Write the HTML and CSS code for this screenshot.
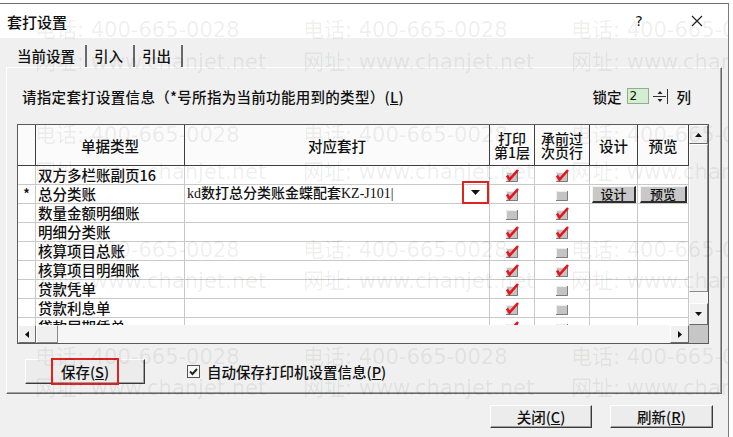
FILE: index.html
```html
<!DOCTYPE html>
<html lang="zh-CN">

<head>
    <meta charset="UTF-8">
    <title>套打设置</title>
    <link rel="stylesheet" href="styles.css">
</head>

<body>
    <div class="dialog">
        <div class="titlebar">
            <span class="title">套打设置</span>
            <div class="title-btns">
                <span class="help">?</span>
                <span class="close">
                    <svg width="12" height="12" viewBox="0 0 12 12"><path d="M1 1L11 11M11 1L1 11" stroke="#222" stroke-width="1.2"/></svg>
                </span>
            </div>
        </div>

        <div class="tabs">
            <span class="tab">当前设置</span><span class="tab">引入</span><span class="tab">引出</span>
        </div>

        <div class="panel">
            <div class="hint-row">
                <span class="hint">请指定套打设置信息（*号所指为当前功能用到的类型）(<u>L</u>)</span>
                <div class="lock">
                    <span>锁定</span>
                    <span class="lock-box">2</span>
                    <svg class="spin" width="18" height="17" viewBox="0 0 18 17">
                        <path d="M1 8.5h13M15.5 1v15" stroke="#333"/>
                        <path d="M5.5 6l2.5-3 2.5 3zM5.5 11l2.5 3 2.5-3z" fill="#222"/>
                    </svg>
                    <span class="lock-unit">列</span>
                </div>
            </div>

            <div class="grid">
                <div class="grid-body">
                    <table>
                        <colgroup>
                            <col class="c-mark"><col class="c-type"><col class="c-tpl"><col class="c-ck1"><col class="c-ck2"><col class="c-btn1"><col class="c-btn2">
                        </colgroup>
                        <thead>
                            <tr class="head">
                                <th></th>
                                <th>单据类型</th>
                                <th>对应套打</th>
                                <th class="two">打印<br>第1层</th>
                                <th class="two">承前过<br>次页行</th>
                                <th>设计</th>
                                <th>预览</th>
                            </tr>
                        </thead>
                        <tbody>
                            <tr>
                                <td class="mark"></td><td>双方多栏账副页16</td><td></td>
                                <td class="ck"><svg class="box"><use href="#ck-on"/></svg></td>
                                <td class="ck"><svg class="box"><use href="#ck-on"/></svg></td>
                                <td></td><td></td>
                            </tr>
                            <tr>
                                <td class="mark">*</td><td>总分类账</td>
                                <td>
                                    <div class="pick">
                                        <span class="pick-text">kd数打总分类账金蝶配套KZ-J101|</span>
                                        <span class="drop">
                                            <svg width="9" height="5" viewBox="0 0 9 5"><path d="M0 0h9L4.5 5z" fill="#111"/></svg>
                                        </span>
                                    </div>
                                </td>
                                <td class="ck"><svg class="box"><use href="#ck-on"/></svg></td>
                                <td class="ck"><svg class="box"><use href="#ck-off"/></svg></td>
                                <td><span class="cell-btn">设计</span></td>
                                <td><span class="cell-btn">预览</span></td>
                            </tr>
                            <tr>
                                <td class="mark"></td><td>数量金额明细账</td><td></td>
                                <td class="ck"><svg class="box"><use href="#ck-off"/></svg></td>
                                <td class="ck"><svg class="box"><use href="#ck-on"/></svg></td>
                                <td></td><td></td>
                            </tr>
                            <tr>
                                <td class="mark"></td><td>明细分类账</td><td></td>
                                <td class="ck"><svg class="box"><use href="#ck-on"/></svg></td>
                                <td class="ck"><svg class="box"><use href="#ck-on"/></svg></td>
                                <td></td><td></td>
                            </tr>
                            <tr>
                                <td class="mark"></td><td>核算项目总账</td><td></td>
                                <td class="ck"><svg class="box"><use href="#ck-on"/></svg></td>
                                <td class="ck"><svg class="box"><use href="#ck-off"/></svg></td>
                                <td></td><td></td>
                            </tr>
                            <tr>
                                <td class="mark"></td><td>核算项目明细账</td><td></td>
                                <td class="ck"><svg class="box"><use href="#ck-on"/></svg></td>
                                <td class="ck"><svg class="box"><use href="#ck-on"/></svg></td>
                                <td></td><td></td>
                            </tr>
                            <tr>
                                <td class="mark"></td><td>贷款凭单</td><td></td>
                                <td class="ck"><svg class="box"><use href="#ck-on"/></svg></td>
                                <td class="ck"><svg class="box"><use href="#ck-off"/></svg></td>
                                <td></td><td></td>
                            </tr>
                            <tr>
                                <td class="mark"></td><td>贷款利息单</td><td></td>
                                <td class="ck"><svg class="box"><use href="#ck-on"/></svg></td>
                                <td class="ck"><svg class="box"><use href="#ck-off"/></svg></td>
                                <td></td><td></td>
                            </tr>
                            <tr>
                                <td class="mark"></td><td>贷款展期凭单</td><td></td>
                                <td class="ck"><svg class="box"><use href="#ck-on"/></svg></td>
                                <td class="ck"><svg class="box"><use href="#ck-off"/></svg></td>
                                <td></td><td></td>
                            </tr>
                        </tbody>
                    </table>
                </div>

                <div class="vscroll">
                    <span class="sb-btn">
                        <svg width="7" height="4" viewBox="0 0 7 4"><path d="M0 4h7L3.5 0z" fill="#111"/></svg>
                    </span>
                    <span class="sb-thumb"></span>
                    <span class="sb-track"></span>
                    <span class="sb-btn down">
                        <svg width="7" height="4" viewBox="0 0 7 4"><path d="M0 0h7L3.5 4z" fill="#111"/></svg>
                    </span>
                </div>
                <div class="hscroll">
                    <span class="sb-btn left">
                        <svg width="4" height="7" viewBox="0 0 4 7"><path d="M4 0v7L0 3.5z" fill="#111"/></svg>
                    </span>
                    <span class="sb-thumb h"></span>
                    <span class="sb-track"></span>
                    <span class="sb-btn right">
                        <svg width="4" height="7" viewBox="0 0 4 7"><path d="M0 0v7L4 3.5z" fill="#111"/></svg>
                    </span>
                </div>
                <div class="corner"></div>
            </div>

            <div class="save-row">
                <button class="btn save"><span class="save-label">保存(<u>S</u>)</span></button>
                <label class="auto-save">
                    <span class="check">
                        <svg width="11" height="11" viewBox="0 0 11 11"><path d="M2 5.5l2.5 2.5 4.5-5" stroke="#1d2a1d" stroke-width="2" fill="none"/></svg>
                    </span>
                    自动保存打印机设置信息(<u>P</u>)
                </label>
            </div>
        </div>

        <div class="footer">
            <button class="btn close-btn">关闭(<u>C</u>)</button>
            <button class="btn refresh-btn">刷新(<u>R</u>)</button>
        </div>

        <!-- watermark on top of the screenshot -->
        <div class="watermark">
            <div class="wm-line"><span>电话: 400-665-0028</span><span>电话: 400-665-0028</span><span>电话: 400-665-0028</span></div>
            <div class="wm-line"><span>网址: www.chanjet.net</span><span>网址: www.chanjet.net</span><span>网址: www.chanjet.net</span></div>
            <div class="wm-line"><span>电话: 400-665-0028</span><span>电话: 400-665-0028</span><span>电话: 400-665-0028</span></div>
            <div class="wm-line"><span>网址: www.chanjet.net</span><span>网址: www.chanjet.net</span><span>网址: www.chanjet.net</span></div>
            <div class="wm-line"><span>电话: 400-665-0028</span><span>电话: 400-665-0028</span><span>电话: 400-665-0028</span></div>
            <div class="wm-line"><span>网址: www.chanjet.net</span><span>网址: www.chanjet.net</span><span>网址: www.chanjet.net</span></div>
            <div class="wm-line"><span>电话: 400-665-0028</span><span>电话: 400-665-0028</span><span>电话: 400-665-0028</span></div>
            <div class="wm-line"><span>网址: www.chanjet.net</span><span>网址: www.chanjet.net</span><span>网址: www.chanjet.net</span></div>
        </div>
    </div>

    <svg class="defs" width="0" height="0">
        <symbol id="ck-off" viewBox="0 0 16 16">
            <rect x="2" y="5" width="12" height="10" fill="#c4c4c4"/>
            <path d="M2.5 14.5V5.5h11" stroke="#efefef" fill="none"/>
            <path d="M2 14.5h11.5V5" stroke="#7c7c7c" fill="none"/>
        </symbol>
        <symbol id="ck-on" viewBox="0 0 16 16">
            <rect x="2" y="5" width="12" height="10" fill="#c4c4c4"/>
            <path d="M2.5 14.5V5.5h11" stroke="#efefef" fill="none"/>
            <path d="M2 14.5h11.5V5" stroke="#7c7c7c" fill="none"/>
            <path d="M3 8.5L5.5 12.5L14 3" stroke="#e8141c" stroke-width="2.6" fill="none"/>
        </symbol>
    </svg>
</body>

</html>
```

FILE: styles.css
```css
body {
    margin: 0;
    background: #fff;
    font-family: "Noto Sans CJK SC", "DejaVu Sans", sans-serif;
    font-size: 14.5px;
    font-weight: 500;
    color: #111;
}

.dialog {
    position: relative;
    width: 729px;
    height: 434px;
    margin-top: 3px;
    box-sizing: border-box;
    border-top: 1px solid #6e6e6e;
    border-right: 1px solid #7a7a7a;
    background: #f0f0f0;
    overflow: hidden;
}

.titlebar {
    height: 34px;
    background: #fff;
    display: flex;
    align-items: center;
    justify-content: space-between;
    padding: 0 21px 0 7px;
    font-size: 15px;
}

.title-btns {
    display: flex;
    gap: 38px;
    align-items: center;
}

.help,
.close {
    width: 20px;
    display: flex;
    justify-content: center;
}

.help {
    font-family: "DejaVu Sans", sans-serif;
    font-size: 14px;
    font-weight: normal;
}

.tabs {
    display: flex;
    height: 29px;
    box-sizing: border-box;
    padding: 7px 0 0 10px;
}

.tab {
    height: 22px;
    line-height: 22px;
    padding: 0 10px 0 7px;
    border-right: 2px solid #6a6a6a;
}

.panel {
    margin-left: 6px;
    width: 716px;
    height: 327px;
    box-sizing: border-box;
    border-top: 1px solid #fff;
    border-left: 1px solid #fff;
    border-right: 1px solid #696969;
    border-bottom: 1px solid #696969;
    box-shadow: inset -1px -1px #a0a0a0;
    padding: 18px 0 0 10px;
}

.hint-row {
    display: flex;
    align-items: center;
    justify-content: space-between;
    height: 20px;
    padding: 0 30px 0 5px;
}

.hint {
    letter-spacing: 0.3px;
}

.lock {
    display: flex;
    align-items: center;
}

.lock-box {
    width: 22px;
    height: 16px;
    margin-left: 5px;
    box-sizing: border-box;
    border: 1px solid #8fae8f;
    background: #d4efcf;
    font-family: "DejaVu Sans", sans-serif;
    font-size: 12px;
    font-weight: normal;
    line-height: 14px;
    padding-left: 2px;
}

.spin {
    margin-left: 3px;
}

.lock-unit {
    margin-left: 7px;
}

/* grid */
.grid {
    margin-top: 18px;
    width: 692px;
    height: 220px;
    box-sizing: border-box;
    border: 1px solid #5a5a5a;
    display: grid;
    grid-template-columns: 671px 19px;
    grid-template-rows: 200px 18px;
    background: #fff;
}

.grid-body {
    overflow: hidden;
}

table {
    border-collapse: separate;
    border-spacing: 0;
    table-layout: fixed;
    width: 671px;
}

.c-mark { width: 18px; }
.c-type { width: 149px; }
.c-tpl { width: 305px; }
.c-ck1 { width: 45px; }
.c-ck2 { width: 55px; }
.c-btn1 { width: 48px; }
.c-btn2 { width: 51px; }

th {
    font-weight: 500;
    background: #fbfbfb;
    border-right: 1px solid #3f3f3f;
    border-bottom: 1px solid #3f3f3f;
    padding: 0;
    text-align: center;
}

th.two {
    font-size: 14px;
    line-height: 14px;
}

tr.head {
    height: 41px;
}

tbody tr {
    height: 19px;
}

td {
    border-right: 1px solid #c9c9c9;
    border-bottom: 1px solid #c9c9c9;
    padding: 0 0 0 2px;
    line-height: 16px;
    white-space: nowrap;
    overflow: visible;
}

td.mark {
    padding: 0;
    text-align: center;
}

td.ck {
    padding: 0;
    text-align: center;
    line-height: 0;
}

.box {
    width: 16px;
    height: 16px;
}

.pick {
    display: flex;
    align-items: center;
    justify-content: space-between;
    height: 18px;
}

.pick-text {
    font-family: "Liberation Serif", "Noto Sans CJK SC", serif;
    font-size: 14px;
}

.drop {
    width: 19px;
    height: 15px;
    margin: 0 4px 4px 0;
    display: flex;
    align-items: center;
    justify-content: center;
    outline: 2px solid #e3211f;
    outline-offset: 2px;
}

.cell-btn {
    display: block;
    height: 17px;
    margin: 0 1px 0 0;
    box-sizing: border-box;
    background: #c8c8c8;
    border: 1px solid;
    border-color: #f4f4f4 #2e2e2e #2e2e2e #f4f4f4;
    border-width: 1px 2px 2px 1px;
    font-size: 13px;
    line-height: 14px;
    text-align: center;
}

/* scrollbars */
.vscroll {
    display: flex;
    flex-direction: column;
    background: #f6f6f6;
}

.hscroll {
    display: flex;
    background: #f6f6f6;
}

.sb-btn {
    height: 19px;
    box-sizing: border-box;
    border: 1px solid;
    border-color: #fff #6a6a6a #6a6a6a #fff;
    background: #f0f0f0;
    display: flex;
    align-items: center;
    justify-content: center;
}

.sb-btn.down {
    height: 22px;
}

.sb-btn.left {
    width: 18px;
    height: 18px;
}

.sb-btn.right {
    width: 19px;
    height: 18px;
}

.sb-thumb {
    height: 148px;
    box-sizing: border-box;
    border: 1px solid;
    border-color: #fff #8a8a8a #8a8a8a #fff;
    background: #f0f0f0;
}

.sb-thumb.h {
    width: 22px;
    height: 18px;
}

.sb-track {
    flex-grow: 1;
}

.corner {
    background: #c6c6c6;
}

/* bottom */
.save-row {
    display: flex;
    align-items: center;
    margin-top: 15px;
    padding-left: 8px;
}

.btn {
    font-family: inherit;
    font-size: 14.5px;
    font-weight: 500;
    color: #111;
    padding: 0;
    background: #ececec;
    border: 1px solid;
    border-color: #fff #3a3a3a #3a3a3a #fff;
    box-shadow: inset -1px -1px #a0a0a0;
}

.btn.save {
    width: 120px;
    height: 25px;
}

.save-label {
    display: inline-block;
    height: 19px;
    line-height: 19px;
    padding: 0 6px;
    outline: 2px solid #e3211f;
    outline-offset: 2px;
}

.auto-save {
    display: flex;
    align-items: center;
    margin-left: 42px;
}

.check {
    width: 13px;
    height: 13px;
    margin-right: 7px;
    box-sizing: border-box;
    border: 1px solid #555;
    background: #f8f8f8;
    display: flex;
    align-items: center;
    justify-content: center;
}

.footer {
    display: flex;
    justify-content: flex-end;
    gap: 18px;
    padding: 11px 15px 0 0;
}

.close-btn {
    width: 102px;
    height: 23px;
}

.refresh-btn {
    width: 103px;
    height: 23px;
}

/* watermark overlay */
.watermark {
    position: absolute;
    inset: 0;
    pointer-events: none;
    padding-top: 15px;
    font-family: "DejaVu Sans", "Noto Sans CJK SC", sans-serif;
    font-size: 21px;
    font-weight: normal;
    color: rgba(0, 0, 0, 0.075);
}

.wm-line {
    display: flex;
    height: 22px;
    line-height: 22px;
    padding-left: 35px;
    white-space: nowrap;
}

.wm-line span {
    width: 268px;
    flex-shrink: 0;
}

.wm-line:nth-child(2) { margin-top: 10px; }
.wm-line:nth-child(3) { margin-top: 51px; }
.wm-line:nth-child(4) { margin-top: 15px; }
.wm-line:nth-child(5) { margin-top: 56px; }
.wm-line:nth-child(6) { margin-top: 9px; }
.wm-line:nth-child(7) { margin-top: 54px; }
.wm-line:nth-child(8) { margin-top: 9px; }

.defs {
    display: block;
    width: 0;
    height: 0;
}
```
